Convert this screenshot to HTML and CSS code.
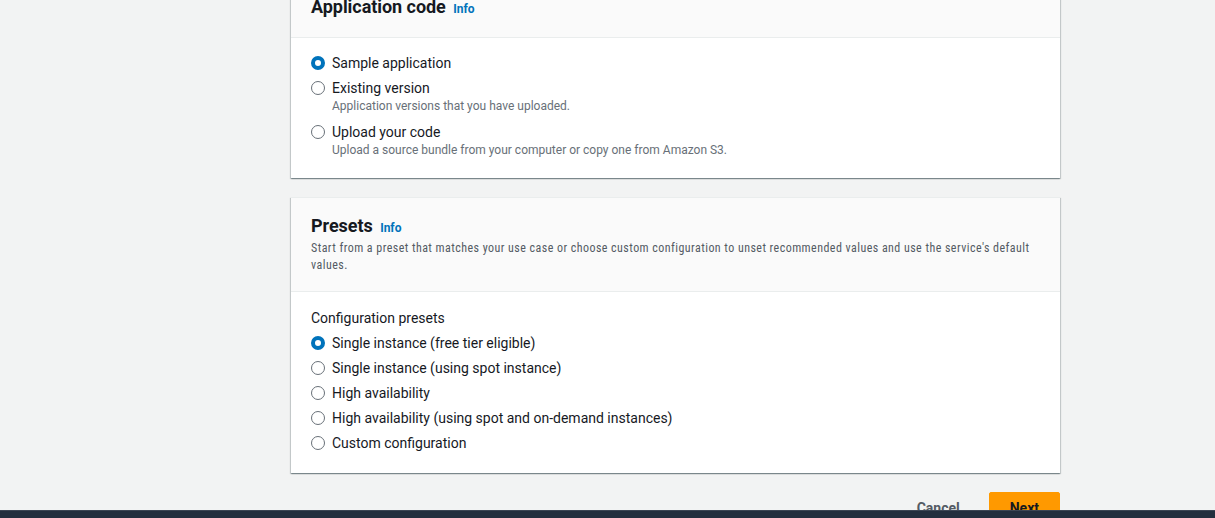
FILE: index.html
```html
<!DOCTYPE html>
<html lang="en">
<head>
<meta charset="utf-8">
<title>Configure environment</title>
<link rel="stylesheet" href="styles.css">
</head>
<body>
<main class="page">
  <section class="card card-app">
    <header class="card-header">
      <h2 class="card-title">Application code <a class="info" href="#">Info</a></h2>
    </header>
    <div class="card-body">
      <div class="radio-group app-group">
        <label class="radio">
          <span class="dot checked"></span>
          <span class="radio-text"><span class="radio-label">Sample application</span></span>
        </label>
        <label class="radio">
          <span class="dot"></span>
          <span class="radio-text">
            <span class="radio-label">Existing version</span>
            <span class="radio-desc">Application versions that you have uploaded.</span>
          </span>
        </label>
        <label class="radio">
          <span class="dot"></span>
          <span class="radio-text">
            <span class="radio-label">Upload your code</span>
            <span class="radio-desc">Upload a source bundle from your computer or copy one from Amazon S3.</span>
          </span>
        </label>
      </div>
    </div>
  </section>

  <section class="card card-presets">
    <header class="card-header">
      <h2 class="card-title">Presets <a class="info" href="#">Info</a></h2>
      <p class="card-desc">Start from a preset that matches your use case or choose custom configuration to unset recommended values and use the service's default values.</p>
    </header>
    <div class="card-body">
      <div class="field-label">Configuration presets</div>
      <div class="radio-group preset-group">
        <label class="radio"><span class="dot checked"></span><span class="radio-label">Single instance (free tier eligible)</span></label>
        <label class="radio"><span class="dot"></span><span class="radio-label">Single instance (using spot instance)</span></label>
        <label class="radio"><span class="dot"></span><span class="radio-label">High availability</span></label>
        <label class="radio"><span class="dot"></span><span class="radio-label">High availability (using spot and on-demand instances)</span></label>
        <label class="radio"><span class="dot"></span><span class="radio-label">Custom configuration</span></label>
      </div>
    </div>
  </section>

  <div class="actions">
    <button class="btn btn-link" type="button">Cancel</button>
    <button class="btn btn-primary" type="button">Next</button>
  </div>
</main>
<footer class="footer-bar"></footer>
</body>
</html>
```

FILE: styles.css
```css
* { box-sizing: border-box; }

html, body {
  margin: 0;
  padding: 0;
  height: 100%;
  overflow: hidden;
}

body {
  background: #f2f3f3;
  font-family: Roboto, "Noto Sans", Arial, sans-serif;
  color: #16191f;
  font-size: 14px;
}

.page {
  width: 769px;
  margin-left: 291px;
  display: flex;
  flex-direction: column;
}

.card {
  background: #ffffff;
  border-top: 1px solid #eaeded;
  box-shadow: 0 1px 1px 0 rgba(0, 28, 36, 0.3), 1px 1px 1px 0 rgba(0, 28, 36, 0.15), -1px 1px 1px 0 rgba(0, 28, 36, 0.15);
}

.card-app {
  margin-top: -20px;
}

.card-presets {
  margin-top: 19px;
}

.card-header {
  background: #fafafa;
  border-bottom: 1px solid #eaeded;
  padding: 16px 20px 20px;
}

.card-presets .card-header {
  padding-top: 18px;
  padding-bottom: 17px;
}

.card-title {
  margin: 0;
  font-family: Roboto, "Noto Sans", sans-serif;
  font-size: 18px;
  line-height: 20px;
  font-weight: 700;
  letter-spacing: -0.05px;
  color: #16191f;
}

.info {
  font-family: Roboto, "Noto Sans", sans-serif;
  font-size: 12px;
  line-height: 12px;
  font-weight: 700;
  letter-spacing: 0;
  color: #0073bb;
  text-decoration: none;
  margin-left: 3px;
}

.card-desc {
  margin: 4px 0 0;
  font-family: "Liberation Sans Narrow", "Roboto Condensed", Roboto, sans-serif;
  font-size: 12px;
  line-height: 17px;
  letter-spacing: 0.45px;
  color: #545b64;
}

.card-body {
  padding: 15px 20px 17px;
}

.card-presets .card-body {
  padding: 16px 20px 20px;
}

.field-label {
  font-size: 14px;
  line-height: 20px;
  color: #16191f;
  margin-bottom: 5px;
}

.radio-group {
  display: flex;
  flex-direction: column;
}

.app-group { gap: 5px; }
.preset-group { gap: 5px; }

.radio {
  display: flex;
  align-items: flex-start;
  gap: 7px;
  cursor: pointer;
}

.radio-text {
  display: flex;
  flex-direction: column;
}

.radio-label {
  font-size: 14px;
  line-height: 20px;
  color: #16191f;
}

.radio-desc {
  font-size: 12px;
  line-height: 16px;
  padding-bottom: 3px;
  color: #687078;
}

.dot {
  flex: none;
  width: 14px;
  height: 14px;
  margin-top: 3px;
  border-radius: 50%;
  border: 1px solid #687078;
  background: #ffffff;
}

.dot.checked {
  border: 4px solid #0073bb;
}

.actions {
  display: flex;
  justify-content: flex-end;
  gap: 8px;
  margin-top: 19px;
}

.btn {
  font-family: inherit;
  font-size: 14px;
  font-weight: 700;
  line-height: 22px;
  padding: 4px 20px;
  border: 1px solid transparent;
  border-radius: 2px;
  background: transparent;
  cursor: pointer;
}

.btn-link {
  color: #545b64;
}

.btn-primary {
  background: #ff9900;
  border-color: #ff9900;
  color: #16191f;
}

.footer-bar {
  position: fixed;
  left: 0;
  right: 0;
  bottom: 0;
  height: 8px;
  background: #232f3e;
  border-top: 1px solid #3c4654;
}
```
